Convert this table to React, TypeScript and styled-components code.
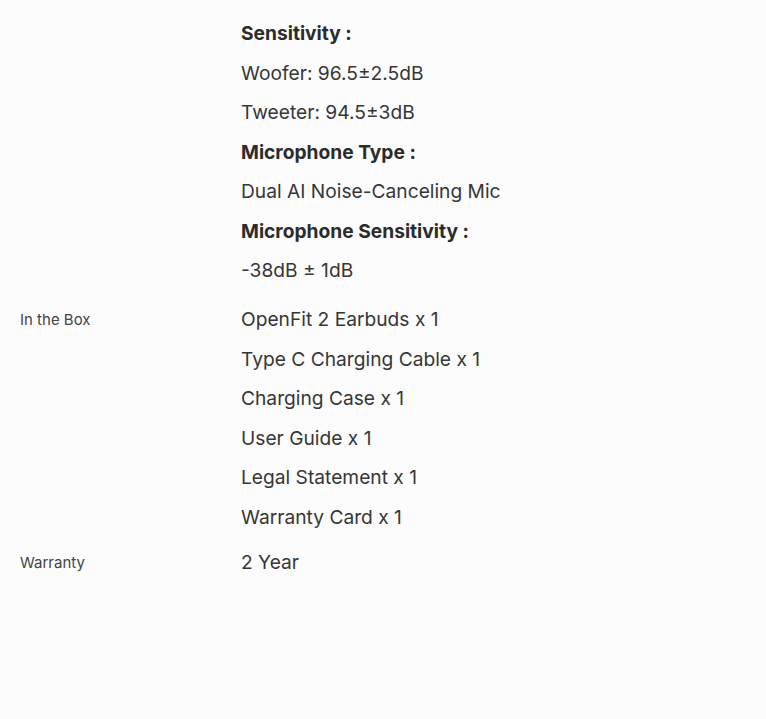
import React from "react";
import styled, { createGlobalStyle } from "styled-components";

const Global = createGlobalStyle`
  html, body { margin: 0; padding: 0; background: #fcfcfc; }
  body { font-family: Inter, "Liberation Sans", Arial, sans-serif; color: #333; }
`;

const Table = styled.div`
  display: flex;
  flex-direction: column;
  padding: 9.25px 0 0 20px;
`;

const Row = styled.div<{ $compact?: boolean }>`
  display: grid;
  grid-template-columns: 221px 1fr;
  padding: ${(p) => (p.$compact ? "1.25px" : "4.75px")} 0 4.75px;
`;

const Label = styled.div`
  font-size: 15px;
  line-height: 39.5px;
  color: #444;
`;

const Values = styled.div`
  display: flex;
  flex-direction: column;
`;

const Line = styled.div<{ $bold?: boolean }>`
  font-size: 19.2px;
  line-height: 39.5px;
  font-weight: ${(p) => (p.$bold ? 700 : 400)};
  color: ${(p) => (p.$bold ? "#2b2b2b" : "#363636")};
  white-space: nowrap;
`;

type Item = { text: string; bold?: boolean };
const rows: { label: string; items: Item[]; compact?: boolean }[] = [
  {
    label: "",
    items: [
      { text: "Sensitivity :", bold: true },
      { text: "Woofer: 96.5±2.5dB" },
      { text: "Tweeter: 94.5±3dB" },
      { text: "Microphone Type :", bold: true },
      { text: "Dual AI Noise-Canceling Mic" },
      { text: "Microphone Sensitivity :", bold: true },
      { text: "-38dB ± 1dB" },
    ],
  },
  {
    label: "In the Box",
    items: [
      { text: "OpenFit 2 Earbuds x 1" },
      { text: "Type C Charging Cable x 1" },
      { text: "Charging Case x 1" },
      { text: "User Guide x 1" },
      { text: "Legal Statement x 1" },
      { text: "Warranty Card x 1" },
    ],
  },
  { label: "Warranty", items: [{ text: "2 Year" }], compact: true },
];

export default function App() {
  return (
    <>
      <Global />
      <Table>
        {rows.map((r, i) => (
          <Row key={i} $compact={r.compact}>
            <Label>{r.label}</Label>
            <Values>
              {r.items.map((it, j) => (
                <Line key={j} $bold={it.bold}>
                  {it.text}
                </Line>
              ))}
            </Values>
          </Row>
        ))}
      </Table>
    </>
  );
}
